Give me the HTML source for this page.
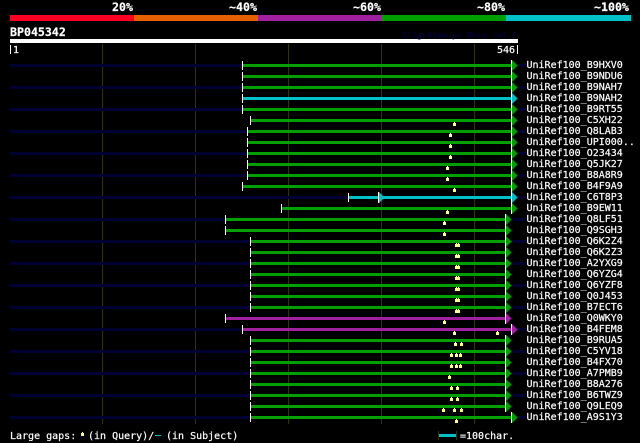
<!DOCTYPE html>
<html><head><meta charset="utf-8"><style>
html,body{margin:0;padding:0;background:#000;width:640px;height:443px;overflow:hidden}
svg{display:block}
text{font-family:"DejaVu Sans Mono","Liberation Mono",monospace;fill:#fff;stroke:#fff;stroke-width:.2px;font-size:10px}
.b{font-weight:bold;font-size:11.6px}
</style></head><body>
<svg width="640" height="443" viewBox="0 0 640 443" xmlns="http://www.w3.org/2000/svg">
<defs>
<path id="m" fill="#ffff80" d="M-1 1h3v3h-3zM0 0h1v1h-1z"/>
<g id="a"><path d="M1 -5L6.5 .5L1 6z"/><rect x="0" y="-5" width="1" height="11" fill="#fff"/></g>
</defs>
<rect width="640" height="443" fill="#000"/>
<rect x="10" y="15" width="124" height="6" fill="#ff0022"/>
<rect x="134" y="15" width="124" height="6" fill="#e66000"/>
<rect x="258" y="15" width="124" height="6" fill="#a020a0"/>
<rect x="382" y="15" width="124" height="6" fill="#00a000"/>
<rect x="506" y="15" width="125" height="6" fill="#00c0c8"/>
<rect x="10" y="39" width="508" height="4" fill="#fff"/>
<path fill="#333300" d="M102 44h1v380h-1zM195 44h1v380h-1zM288 44h1v380h-1zM381 44h1v380h-1zM474 44h1v380h-1z"/>
<path fill="#fff" d="M10 45h1v9h-1zM517 45h1v9h-1z"/>
<path fill="#000033" d="M10 64h232v3h-232zM10 86h232v3h-232zM10 108h232v3h-232zM10 130h237v3h-237zM10 152h237v3h-237zM10 174h237v3h-237zM10 196h338v3h-338zM10 218h215v3h-215zM10 240h240v3h-240zM10 262h240v3h-240zM10 284h240v3h-240zM10 306h240v3h-240zM10 328h232v3h-232zM10 350h240v3h-240zM10 372h240v3h-240zM10 394h240v3h-240zM10 416h240v3h-240zM517 64h9v3h-9zM517 86h9v3h-9zM517 108h9v3h-9zM517 130h9v3h-9zM517 152h9v3h-9zM517 174h9v3h-9zM517 196h9v3h-9zM511 218h15v3h-15zM511 240h15v3h-15zM511 262h15v3h-15zM511 284h15v3h-15zM511 306h15v3h-15zM517 328h9v3h-9zM511 350h15v3h-15zM511 372h15v3h-15zM511 394h15v3h-15zM517 416h9v3h-9z"/>
<path fill="#00a000" d="M242 64h270v3h-270zM242 75h270v3h-270zM242 86h270v3h-270zM242 108h270v3h-270zM250 119h262v3h-262zM247 130h265v3h-265zM247 141h265v3h-265zM247 152h265v3h-265zM247 163h265v3h-265zM247 174h265v3h-265zM242 185h270v3h-270zM281 207h231v3h-231zM225 218h281v3h-281zM225 229h281v3h-281zM250 240h256v3h-256zM250 251h256v3h-256zM250 262h256v3h-256zM250 273h256v3h-256zM250 284h256v3h-256zM250 295h256v3h-256zM250 306h256v3h-256zM250 339h256v3h-256zM250 350h256v3h-256zM250 361h256v3h-256zM250 372h256v3h-256zM250 383h256v3h-256zM250 394h256v3h-256zM250 405h256v3h-256zM250 416h262v3h-262z"/>
<path fill="#00c0c8" d="M242 97h270v3h-270zM348 196h164v3h-164z"/>
<path fill="#a020a0" d="M225 317h281v3h-281zM242 328h270v3h-270z"/>
<path fill="#fff" d="M242 61h1v9h-1zM242 72h1v9h-1zM242 83h1v9h-1zM242 94h1v9h-1zM242 105h1v9h-1zM250 116h1v9h-1zM247 127h1v9h-1zM247 138h1v9h-1zM247 149h1v9h-1zM247 160h1v9h-1zM247 171h1v9h-1zM242 182h1v9h-1zM348 193h1v9h-1zM281 204h1v9h-1zM225 215h1v9h-1zM225 226h1v9h-1zM250 237h1v9h-1zM250 248h1v9h-1zM250 259h1v9h-1zM250 270h1v9h-1zM250 281h1v9h-1zM250 292h1v9h-1zM250 303h1v9h-1zM225 314h1v9h-1zM242 325h1v9h-1zM250 336h1v9h-1zM250 347h1v9h-1zM250 358h1v9h-1zM250 369h1v9h-1zM250 380h1v9h-1zM250 391h1v9h-1zM250 402h1v9h-1zM250 413h1v9h-1z"/>
<g fill="#00a000">
<use href="#a" x="511" y="65"/><use href="#a" x="511" y="76"/><use href="#a" x="511" y="87"/><use href="#a" x="511" y="98" fill="#00c0c8"/><use href="#a" x="511" y="109"/><use href="#a" x="511" y="120"/><use href="#a" x="511" y="131"/><use href="#a" x="511" y="142"/><use href="#a" x="511" y="153"/><use href="#a" x="511" y="164"/><use href="#a" x="511" y="175"/><use href="#a" x="511" y="186"/><use href="#a" x="511" y="197" fill="#00c0c8"/><use href="#a" x="378" y="197" fill="#00c0c8"/><use href="#a" x="511" y="208"/><use href="#a" x="505" y="219"/><use href="#a" x="505" y="230"/><use href="#a" x="505" y="241"/><use href="#a" x="505" y="252"/><use href="#a" x="505" y="263"/><use href="#a" x="505" y="274"/><use href="#a" x="505" y="285"/><use href="#a" x="505" y="296"/><use href="#a" x="505" y="307"/><use href="#a" x="505" y="318" fill="#a020a0"/><use href="#a" x="511" y="329" fill="#a020a0"/><use href="#a" x="505" y="340"/><use href="#a" x="505" y="351"/><use href="#a" x="505" y="362"/><use href="#a" x="505" y="373"/><use href="#a" x="505" y="384"/><use href="#a" x="505" y="395"/><use href="#a" x="505" y="406"/><use href="#a" x="511" y="417"/>
</g>
<use href="#m" x="454" y="122"/><use href="#m" x="450" y="133"/><use href="#m" x="450" y="144"/><use href="#m" x="450" y="155"/><use href="#m" x="447" y="166"/><use href="#m" x="447" y="177"/><use href="#m" x="454" y="188"/><use href="#m" x="447" y="210"/><use href="#m" x="444" y="221"/><use href="#m" x="444" y="232"/>
<use href="#m" x="456" y="243"/><use href="#m" x="458" y="243"/><use href="#m" x="456" y="254"/><use href="#m" x="458" y="254"/><use href="#m" x="456" y="265"/><use href="#m" x="458" y="265"/><use href="#m" x="456" y="276"/><use href="#m" x="458" y="276"/><use href="#m" x="456" y="287"/><use href="#m" x="458" y="287"/><use href="#m" x="456" y="298"/><use href="#m" x="458" y="298"/><use href="#m" x="456" y="309"/><use href="#m" x="458" y="309"/>
<use href="#m" x="444" y="320"/><use href="#m" x="454" y="331"/><use href="#m" x="497" y="331"/><use href="#m" x="455" y="342"/><use href="#m" x="461" y="342"/><use href="#m" x="451" y="353"/><use href="#m" x="456" y="353"/><use href="#m" x="460" y="353"/><use href="#m" x="451" y="364"/><use href="#m" x="456" y="364"/><use href="#m" x="460" y="364"/><use href="#m" x="449" y="375"/><use href="#m" x="451" y="386"/><use href="#m" x="457" y="386"/><use href="#m" x="451" y="397"/><use href="#m" x="457" y="397"/><use href="#m" x="443" y="408"/><use href="#m" x="454" y="408"/><use href="#m" x="461" y="408"/><use href="#m" x="456" y="419"/>
<use href="#m" x="82" y="432"/>
<text class="b" x="112" y="11">20%</text>
<text class="b" x="229" y="11">~40%</text>
<text class="b" x="353" y="11">~60%</text>
<text class="b" x="477" y="11">~80%</text>
<text class="b" x="594" y="11">~100%</text>
<text class="b" x="10" y="36">BP045342</text>
<text x="402" y="38" style="fill:#000033;stroke:none;font-weight:bold;font-size:8.3px">AlignView.pm Beta rel.7</text>
<text x="13" y="53">1</text>
<text x="497" y="53">546</text>
<text x="526.5" y="68">UniRef100_B9HXV0</text>
<text x="526.5" y="79">UniRef100_B9NDU6</text>
<text x="526.5" y="90">UniRef100_B9NAH7</text>
<text x="526.5" y="101">UniRef100_B9NAH2</text>
<text x="526.5" y="112">UniRef100_B9RT55</text>
<text x="526.5" y="123">UniRef100_C5XH22</text>
<text x="526.5" y="134">UniRef100_Q8LAB3</text>
<text x="526.5" y="145">UniRef100_UPI000..</text>
<text x="526.5" y="156">UniRef100_O23434</text>
<text x="526.5" y="167">UniRef100_Q5JK27</text>
<text x="526.5" y="178">UniRef100_B8A8R9</text>
<text x="526.5" y="189">UniRef100_B4F9A9</text>
<text x="526.5" y="200">UniRef100_C6T8P3</text>
<text x="526.5" y="211">UniRef100_B9EW11</text>
<text x="526.5" y="222">UniRef100_Q8LF51</text>
<text x="526.5" y="233">UniRef100_Q9SGH3</text>
<text x="526.5" y="244">UniRef100_Q6K2Z4</text>
<text x="526.5" y="255">UniRef100_Q6K2Z3</text>
<text x="526.5" y="266">UniRef100_A2YXG9</text>
<text x="526.5" y="277">UniRef100_Q6YZG4</text>
<text x="526.5" y="288">UniRef100_Q6YZF8</text>
<text x="526.5" y="299">UniRef100_Q0J453</text>
<text x="526.5" y="310">UniRef100_B7ECT6</text>
<text x="526.5" y="321">UniRef100_Q0WKY0</text>
<text x="526.5" y="332">UniRef100_B4FEM8</text>
<text x="526.5" y="343">UniRef100_B9RUA5</text>
<text x="526.5" y="354">UniRef100_C5YV18</text>
<text x="526.5" y="365">UniRef100_B4FX70</text>
<text x="526.5" y="376">UniRef100_A7PMB9</text>
<text x="526.5" y="387">UniRef100_B8A276</text>
<text x="526.5" y="398">UniRef100_B6TWZ9</text>
<text x="526.5" y="409">UniRef100_Q9LEQ9</text>
<text x="526.5" y="420">UniRef100_A9S1Y3</text>
<text x="10" y="439">Large gaps:</text>
<text x="88" y="439">(in Query)/</text>
<rect x="155" y="435" width="6" height="1" fill="#00c0c8"/>
<text x="166" y="439">(in Subject)</text>
<path fill="#333300" d="M438 431h1v9h-1zM456 431h1v9h-1z"/>
<rect x="439" y="434" width="17" height="3" fill="#00c0c8"/>
<text x="460" y="439">=100char.</text>
</svg>
</body></html>
